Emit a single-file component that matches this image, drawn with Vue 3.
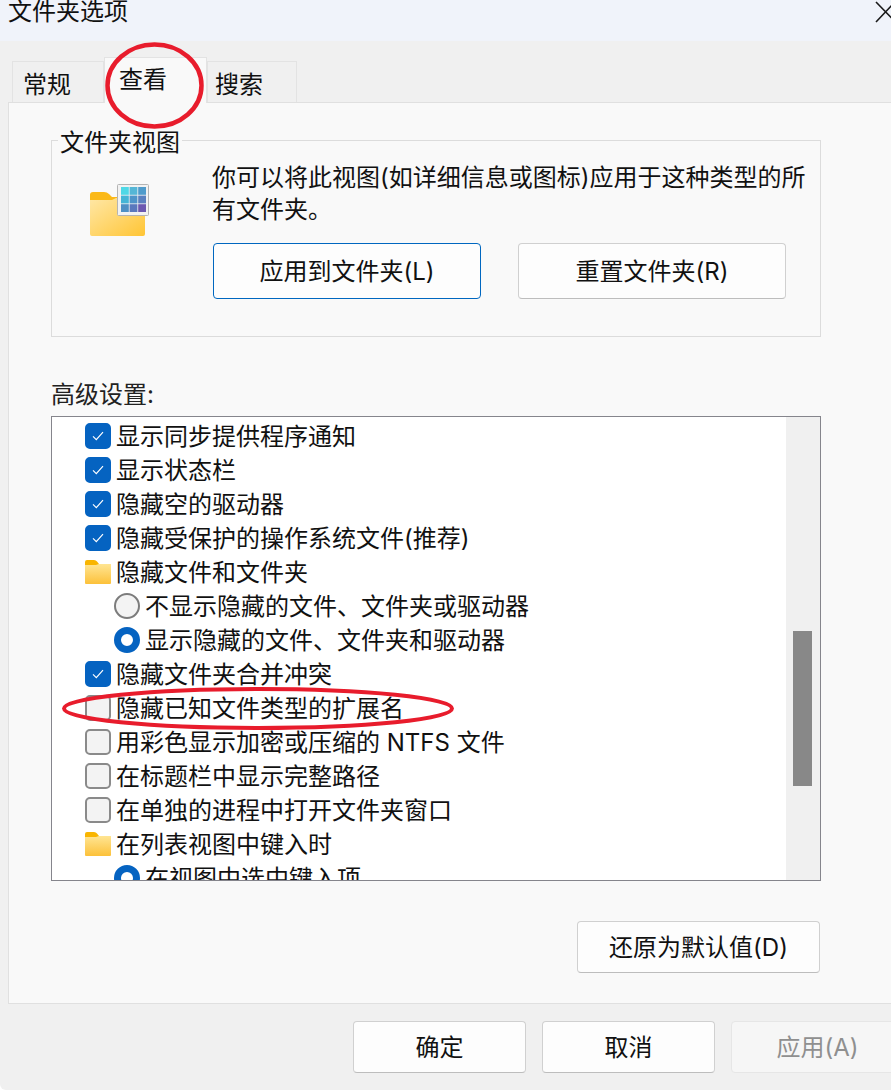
<script setup>
const tabs = [
  { label: "常规", active: false },
  { label: "查看", active: true },
  { label: "搜索", active: false },
];

const rows = [
  { type: "check", on: true, text: "显示同步提供程序通知" },
  { type: "check", on: true, text: "显示状态栏" },
  { type: "check", on: true, text: "隐藏空的驱动器" },
  { type: "check", on: true, text: "隐藏受保护的操作系统文件(推荐)" },
  { type: "folder", text: "隐藏文件和文件夹" },
  { type: "radio", on: false, text: "不显示隐藏的文件、文件夹或驱动器" },
  { type: "radio", on: true, text: "显示隐藏的文件、文件夹和驱动器" },
  { type: "check", on: true, text: "隐藏文件夹合并冲突" },
  { type: "check", on: false, text: "隐藏已知文件类型的扩展名" },
  { type: "check", on: false, text: "用彩色显示加密或压缩的 NTFS 文件" },
  { type: "check", on: false, text: "在标题栏中显示完整路径" },
  { type: "check", on: false, text: "在单独的进程中打开文件夹窗口" },
  { type: "folder", text: "在列表视图中键入时" },
  { type: "radio", on: true, text: "在视图中选中键入项" },
];

const gridColors = [
  "#4fd8e6", "#55b6d6", "#4f9bcb",
  "#45b5d6", "#4f94c9", "#5a80bf",
  "#4f90c4", "#5a78bd", "#6c58b0",
];
</script>

<template>
  <div class="window">
    <header class="titlebar">
      <span class="title">文件夹选项</span>
      <svg class="close" width="16" height="23" viewBox="0 0 16 23">
        <path d="M1 2 L20 21.5 M1 22 L20 2" stroke="#1a1a1a" stroke-width="1.6" fill="none" />
      </svg>
    </header>

    <nav class="tabs">
      <div v-for="tab in tabs" :key="tab.label" class="tab" :class="{ active: tab.active }">{{ tab.label }}</div>
    </nav>

    <main class="panel">
      <section class="group">
        <span class="group-label">文件夹视图</span>
        <svg class="big-folder" width="62" height="54" viewBox="0 0 62 54">
          <defs>
            <linearGradient id="bigBody" x1="0" y1="0" x2="1" y2="1">
              <stop offset="0" stop-color="#ffe7a6" />
              <stop offset="1" stop-color="#ffc535" />
            </linearGradient>
          </defs>
          <path d="M2 12 Q2 9 5 9 H16 Q19 9 21 11 L24 14 H40 V22 H2 Z" fill="#fbb918" />
          <path d="M2 17 H24 L28 15 H55 Q57 15 57 17 V51 Q57 53 55 53 H4 Q2 53 2 51 Z" fill="url(#bigBody)" />
          <rect x="29.5" y="1.5" width="31" height="31" rx="1" fill="#f2f2f2" stroke="#b4b4b4" />
          <g>
            <rect
              v-for="(color, i) in gridColors"
              :key="i"
              :x="33 + (i % 3) * 8.6"
              :y="4 + Math.floor(i / 3) * 8.6"
              width="7.8"
              height="7.8"
              :fill="color"
            />
          </g>
        </svg>
        <div class="group-body">
          <p class="desc">你可以将此视图(如详细信息或图标)应用于这种类型的所有文件夹。</p>
          <div class="group-buttons">
            <button class="btn wide primary">应用到文件夹(L)</button>
            <button class="btn wide">重置文件夹(R)</button>
          </div>
        </div>
      </section>

      <div class="adv-label">高级设置:</div>
      <div class="listbox">
        <div class="list">
          <div v-for="row in rows" :key="row.text" class="row" :class="{ sub: row.type === 'radio' }">
            <span v-if="row.type === 'check'" class="check" :class="{ on: row.on }">
              <svg v-if="row.on" width="12" height="10" viewBox="0 0 12 10">
                <path d="M1 5.4 L4.3 8.6 L11 1.2" stroke="#fff" stroke-width="1.2" fill="none" />
              </svg>
            </span>
            <span v-else-if="row.type === 'radio'" class="radio" :class="{ on: row.on }"></span>
            <svg v-else class="small-folder" width="26" height="24" viewBox="0 0 26 24">
              <defs>
                <linearGradient id="smallBody" x1="0" y1="0" x2="0" y2="1">
                  <stop offset="0" stop-color="#ffe593" />
                  <stop offset="1" stop-color="#fcc13a" />
                </linearGradient>
              </defs>
              <path d="M0 2 Q0 0 2 0 H9 Q11 0 12 1.5 L14 4 H26 V8 H0 Z" fill="#f9b500" />
              <path d="M0 5 H11 L14 4 H26 V23 Q26 24 25 24 H1 Q0 24 0 23 Z" fill="url(#smallBody)" />
            </svg>
            <span class="row-text">{{ row.text }}</span>
          </div>
        </div>
        <div class="scrollbar"><div class="thumb"></div></div>
      </div>

      <div class="restore-row">
        <button class="btn restore">还原为默认值(D)</button>
      </div>
    </main>

    <footer class="footer">
      <button class="btn action">确定</button>
      <button class="btn action">取消</button>
      <button class="btn action disabled">应用(A)</button>
    </footer>

    <!-- 红色标注 -->
    <svg class="marks" width="891" height="1090" viewBox="0 0 891 1090">
      <ellipse cx="154.5" cy="85.5" rx="47" ry="41" fill="none" stroke="#e81c2c" stroke-width="4.5" />
      <ellipse cx="258" cy="708.5" rx="194" ry="19.5" fill="none" stroke="#e81c2c" stroke-width="4" />
    </svg>
  </div>
</template>

<style>
html,
body {
  background: #fff;
}
</style>

<style scoped>
.window {
  position: relative;
  width: 891px;
  height: 1090px;
  overflow: hidden;
  background: #f0f0f0;
  border-bottom-left-radius: 6px;
  font-family: Inter, "Noto Sans CJK SC", sans-serif;
  font-size: 24px;
  line-height: 32px;
  color: #111;
}
.titlebar {
  height: 41px;
  background: #f0f3fa;
  display: flex;
  justify-content: space-between;
  padding-left: 8px;
  box-sizing: border-box;
}
.title {
  margin-top: -4px;
}
.close {
  flex-shrink: 0;
}
.tabs {
  height: 61px;
  padding-left: 12px;
  display: flex;
  align-items: flex-end;
  box-sizing: border-box;
}
.tab {
  position: relative;
  width: 92px;
  height: 41px;
  box-sizing: border-box;
  padding: 7px 0 0 10px;
  background: #f0f0f0;
  border: 1px solid #e3e3e3;
  border-bottom: none;
}
.tab:nth-child(2) {
  width: 103px;
  height: 46px;
  margin-bottom: -1px;
  padding: 6px 0 0 14px;
  background: #f9f9f9;
  z-index: 1;
}
.tab:nth-child(3) {
  width: 90px;
  padding-left: 7px;
}
.panel {
  width: 930px;
  height: 902px;
  margin-left: 8px;
  padding: 37px 0 0 42px;
  box-sizing: border-box;
  background: #f9f9f9;
  border: 1px solid #e0e0e0;
}
.group {
  position: relative;
  width: 770px;
  height: 197px;
  box-sizing: border-box;
  border: 1px solid #dcdcdc;
  display: flex;
}
.group-label {
  position: absolute;
  top: -14px;
  left: 6px;
  padding: 0 2px;
  background: #f9f9f9;
}
.big-folder {
  flex-shrink: 0;
  margin: 42px 0 0 36px;
}
.group-body {
  margin-left: 62px;
  padding-top: 21px;
  width: 610px;
}
.desc {
  margin: 0;
  width: 600px;
}
.group-buttons {
  display: flex;
  gap: 37px;
  margin: 17px 0 0 1px;
}
.btn {
  font: inherit;
  color: inherit;
  padding: 2px 0 0;
  background: #fdfdfd;
  border: 1px solid #d0d0d0;
  border-bottom-color: #bdbdbd;
  border-radius: 4px;
  box-sizing: border-box;
  flex-shrink: 0;
}
.wide {
  width: 268px;
  height: 56px;
}
.primary {
  border-color: #0067c0;
}
.adv-label {
  margin-top: 42px;
  height: 32px;
  color: #222;
}
.listbox {
  margin-top: 5px;
  width: 770px;
  height: 465px;
  box-sizing: border-box;
  border: 1px solid #85858c;
  background: #fff;
  display: flex;
  overflow: hidden;
}
.list {
  flex: 1;
  padding-top: 2px;
}
.row {
  height: 34px;
  display: flex;
  align-items: center;
  gap: 5px;
  padding-left: 33px;
  white-space: nowrap;
}
.row.sub {
  padding-left: 62px;
}
.row-text {
  margin-top: 2px;
}
.check {
  width: 26px;
  height: 26px;
  box-sizing: border-box;
  border: 2px solid #8a8a8a;
  border-radius: 5px;
  background: #f3f3f3;
  display: flex;
  align-items: center;
  justify-content: center;
  flex-shrink: 0;
}
.check.on {
  background: #0563c1;
  border-color: #0563c1;
}
.radio {
  width: 26px;
  height: 26px;
  box-sizing: border-box;
  border: 2px solid #7c7c7c;
  border-radius: 50%;
  background: #f3f3f3;
  flex-shrink: 0;
}
.radio.on {
  border: 7.5px solid #0563c1;
  background: #fff;
}
.small-folder {
  flex-shrink: 0;
}
.scrollbar {
  width: 34px;
  background: #f0f0f0;
  padding: 214px 8px 0 7px;
  box-sizing: border-box;
  flex-shrink: 0;
}
.thumb {
  width: 19px;
  height: 155px;
  background: #888;
}
.restore-row {
  width: 769px;
  margin-top: 40px;
  display: flex;
  justify-content: flex-end;
}
.restore {
  width: 243px;
  height: 52px;
}
.footer {
  display: flex;
  gap: 16px;
  padding: 17px 0 0 353px;
}
.action {
  width: 173px;
  height: 52px;
}
.disabled {
  background: #f6f6f6;
  border-color: #e6e6e6;
  color: #8f8f8f;
}
.marks {
  position: absolute;
  top: 0;
  left: 0;
  z-index: 2;
  pointer-events: none;
}
</style>
